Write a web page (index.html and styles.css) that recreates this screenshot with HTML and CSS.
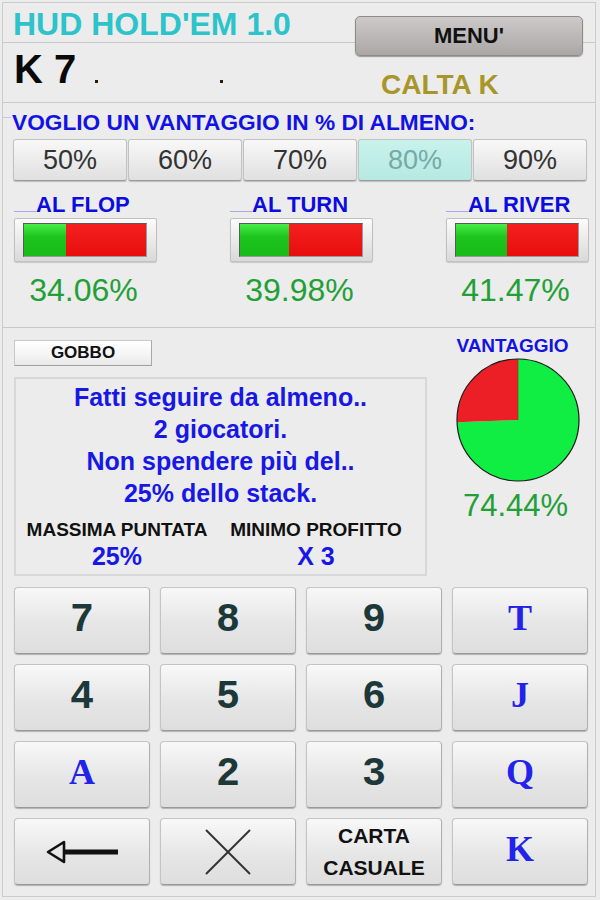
FILE: index.html
```html
<!DOCTYPE html>
<html lang="it">
<head>
<meta charset="utf-8">
<title>HUD HOLD'EM 1.0</title>
<link rel="stylesheet" href="styles.css">
</head>
<body>
<div class="app">
  <header class="title-row"><h1 class="title">HUD HOLD'EM 1.0</h1></header>
  <button class="menu-btn">MENU'</button>

  <section class="hand-row">
    <div class="hand">K 7<span class="dot dot1"></span><span class="dot dot2"></span></div>
    <div class="calta">CALTA K</div>
  </section>

  <section class="odds">
    <div class="want"><span class="tick"></span>VOGLIO UN VANTAGGIO IN % DI ALMENO:</div>
    <div class="pct-row">
      <button class="pct-btn">50%</button>
      <button class="pct-btn">60%</button>
      <button class="pct-btn">70%</button>
      <button class="pct-btn is-active">80%</button>
      <button class="pct-btn">90%</button>
    </div>
    <div class="streets">
      <div class="street">
        <div class="street-label"><span class="under"></span>AL FLOP</div>
        <div class="bar"><div class="bar-track"><div class="bar-green" style="width:34.06%"></div><div class="bar-red"></div></div></div>
        <div class="street-val">34.06%</div>
      </div>
      <div class="street">
        <div class="street-label"><span class="under"></span>AL TURN</div>
        <div class="bar"><div class="bar-track"><div class="bar-green" style="width:39.98%"></div><div class="bar-red"></div></div></div>
        <div class="street-val">39.98%</div>
      </div>
      <div class="street">
        <div class="street-label"><span class="under"></span>AL RIVER</div>
        <div class="bar"><div class="bar-track"><div class="bar-green" style="width:41.47%"></div><div class="bar-red"></div></div></div>
        <div class="street-val">41.47%</div>
      </div>
    </div>
  </section>

  <section class="advice">
    <div class="advice-top">
      <div class="advice-left">
        <div class="gobbo">GOBBO</div>
        <div class="info">
          <p class="info-text">Fatti seguire da almeno..<br>2 giocatori.<br>Non spendere più del..<br>25% dello stack.</p>
          <div class="info-stats">
            <div class="stat"><div class="stat-label">MASSIMA PUNTATA</div><div class="stat-val">25%</div></div>
            <div class="stat"><div class="stat-label">MINIMO PROFITTO</div><div class="stat-val">X 3</div></div>
          </div>
        </div>
      </div>
      <div class="advice-right">
        <div class="vant-label">VANTAGGIO</div>
        <svg class="pie" width="124" height="124" viewBox="0 0 124 124">
          <path d="M62,62 L1.04,64.13 A61,61 0 1,0 62,1 Z" fill="#10ee44"/>
          <path d="M62,62 L62,1 A61,61 0 0,0 1.04,64.13 Z" fill="#ec1f27"/>
          <circle cx="62" cy="62" r="61" fill="none" stroke="#1a1a1a" stroke-width="1.2"/>
          <line x1="62" y1="62" x2="62" y2="1" stroke="#7a3a20" stroke-width="0.6"/>
        </svg>
        <div class="vant-val">74.44%</div>
      </div>
    </div>

    <div class="keypad">
      <button class="key">7</button>
      <button class="key">8</button>
      <button class="key">9</button>
      <button class="key key-card">T</button>
      <button class="key">4</button>
      <button class="key">5</button>
      <button class="key">6</button>
      <button class="key key-card">J</button>
      <button class="key key-card">A</button>
      <button class="key">2</button>
      <button class="key">3</button>
      <button class="key key-card">Q</button>
      <button class="key key-icon" aria-label="indietro">
        <svg width="74" height="30" viewBox="0 0 74 30">
          <polygon points="3,15 19,5 19,25" fill="none" stroke="#111" stroke-width="2.6" stroke-linejoin="round"/>
          <line x1="19" y1="15" x2="73" y2="15" stroke="#111" stroke-width="5"/>
        </svg>
      </button>
      <button class="key key-icon" aria-label="cancella">
        <svg width="48" height="48" viewBox="0 0 48 48">
          <line x1="2" y1="2" x2="46" y2="46" stroke="#333" stroke-width="2"/>
          <line x1="46" y1="2" x2="2" y2="46" stroke="#333" stroke-width="2"/>
        </svg>
      </button>
      <button class="key key-text">CARTA<br>CASUALE</button>
      <button class="key key-card">K</button>
    </div>
  </section>
</div>
</body>
</html>
```

FILE: styles.css
```css
* { box-sizing: border-box; }
html, body { margin: 0; padding: 0; }
body {
  width: 600px;
  height: 900px;
  background: #ececec;
  padding: 2px 4px 0 2px;
  font-family: "Liberation Sans", Arial, sans-serif;
  overflow: hidden;
}
.app {
  position: relative;
  height: 895px;
  border: 1px solid #cccccc;
  background: #ececec;
}

/* header */
.title-row {
  height: 40px;
  border-bottom: 1px solid #c9c9c9;
  padding: 3px 0 0 10px;
}
.title {
  margin: 0;
  font-size: 32px;
  line-height: 36px;
  font-weight: bold;
  color: #2cc3cb;
  white-space: nowrap;
}
.menu-btn {
  position: absolute;
  left: 352px;
  top: 13px;
  width: 228px;
  height: 40px;
  border: 1px solid #8e8a8a;
  border-radius: 5px;
  background: linear-gradient(#cdc9c9, #aba7a7);
  box-shadow: 0 1px 1px rgba(0,0,0,0.35);
  font-family: "Liberation Sans", Arial, sans-serif;
  font-size: 22px;
  font-weight: bold;
  color: #111;
  padding: 0;
}

/* hand row */
.hand-row {
  height: 60px;
  border-bottom: 1px solid #c9c9c9;
  display: grid;
  grid-template-columns: 378px auto;
}
.hand {
  padding: 6px 0 0 11px;
  font-size: 40px;
  line-height: 40px;
  font-weight: bold;
  color: #0a0a0a;
  white-space: nowrap;
}
.dot {
  display: inline-block;
  width: 3px;
  height: 3px;
  background: #2a1a08;
  vertical-align: baseline;
}
.dot1 { margin-left: 19px; }
.dot2 { margin-left: 122px; }
.calta {
  padding-top: 27px;
  font-size: 28px;
  line-height: 30px;
  font-weight: bold;
  color: #a8962a;
  white-space: nowrap;
}

/* odds section */
.odds {
  height: 225px;
  border-bottom: 1px solid #c9c9c9;
  padding-top: 7px;
}
.want {
  font-size: 22.7px;
  line-height: 25px;
  font-weight: bold;
  color: #1212e4;
  white-space: nowrap;
}
.tick {
  display: inline-block;
  width: 8px;
  height: 1px;
  margin-right: 1px;
  background: #c4c4ee;
  vertical-align: 12px;
}
.pct-row {
  margin-top: 4px;
  padding-left: 10px;
  display: flex;
  gap: 1px;
}
.pct-btn {
  width: 114px;
  height: 42px;
  padding: 0;
  border: 1px solid #c2c2c2;
  border-bottom-color: #9c9c9c;
  border-radius: 3px;
  background: linear-gradient(#f8f8f8, #e0e0e0);
  box-shadow: 0 1px 1px rgba(0,0,0,0.2);
  font-family: "Liberation Sans", Arial, sans-serif;
  font-size: 27px;
  color: #333;
}
.pct-btn.is-active {
  background: linear-gradient(#c9f2ec, #b6e9e2);
  color: #74aaa8;
}
.streets {
  margin-top: 12px;
  padding-left: 11px;
  display: grid;
  grid-template-columns: repeat(3, 143px);
  column-gap: 73px;
}
.street-label {
  font-size: 22px;
  line-height: 23px;
  font-weight: bold;
  color: #0c0ce0;
  white-space: nowrap;
}
.under {
  display: inline-block;
  width: 22px;
  height: 0;
  border-bottom: 1px solid #a8a8e6;
}
.bar {
  margin-top: 2px;
  height: 44px;
  padding: 4px 9px 4px 8px;
  border: 1px solid #c0c0c0;
  border-radius: 2px;
  background: linear-gradient(#fbfbfb, #d9d9d9);
  box-shadow: 0 1px 1px rgba(0,0,0,0.15);
}
.bar-track {
  display: flex;
  height: 100%;
  border: 1px solid #5a5a5a;
  border-right-color: #999;
  border-bottom-color: #999;
}
.bar-green { background: linear-gradient(#48ee48, #1cc41c 40%, #19bb19); }
.bar-red { flex: 1; background: linear-gradient(#f42020, #e80d0d); }
.street-val {
  margin-top: 10px;
  padding-right: 4px;
  text-align: center;
  font-size: 32px;
  line-height: 36px;
  color: #22a035;
}

/* advice */
.advice {
  padding: 8px 0 0 11px;
}
.advice-top {
  display: grid;
  grid-template-columns: 413px auto;
}
.advice-left { padding-top: 4px; }
.gobbo {
  width: 138px;
  height: 26px;
  border: 1px solid #c8c8c8;
  border-right-color: #a8a8a8;
  border-bottom-color: #a0a0a0;
  background: linear-gradient(#ffffff, #f4f4f4 60%, #e8e8e8);
  text-align: center;
  font-size: 17px;
  line-height: 24px;
  font-weight: bold;
  color: #111;
}
.info {
  margin-top: 11px;
  height: 199px;
  border: 2px solid #d8d8d8;
  padding-top: 2px;
}
.info-text {
  margin: 0;
  text-align: center;
  font-size: 25px;
  line-height: 32px;
  font-weight: bold;
  color: #1818e6;
}
.info-stats {
  margin-top: 11px;
  display: grid;
  grid-template-columns: 202px 196px;
}
.stat { text-align: center; white-space: nowrap; }
.stat-label {
  font-size: 19px;
  line-height: 20px;
  font-weight: bold;
  color: #111;
}
.stat-val {
  margin-top: 2px;
  font-size: 25px;
  line-height: 28px;
  font-weight: bold;
  color: #1818e6;
}
.advice-right {
  padding-left: 29px;
  width: 153px;
}
.vant-label {
  width: 124px;
  padding-right: 11px;
  text-align: center;
  font-size: 19px;
  line-height: 20px;
  font-weight: bold;
  color: #1414e0;
  white-space: nowrap;
}
.pie {
  display: block;
  margin-top: 2px;
}
.vant-val {
  width: 124px;
  padding-right: 5px;
  margin-top: 7px;
  text-align: center;
  font-size: 31px;
  line-height: 34px;
  color: #22a035;
  white-space: nowrap;
}

/* keypad */
.keypad {
  margin-top: 11px;
  display: grid;
  grid-template-columns: repeat(4, 136px);
  grid-auto-rows: 67px;
  column-gap: 10px;
  row-gap: 10px;
}
.key {
  padding: 0;
  border: 1px solid #c4c4c4;
  border-bottom-color: #989898;
  border-right-color: #b0b0b0;
  border-radius: 4px;
  background: linear-gradient(#f8f8f8, #e6e6e6 55%, #dedede);
  box-shadow: 0 1px 1px rgba(0,0,0,0.25);
  font-family: "Liberation Mono", "Courier New", monospace;
  font-size: 40px;
  font-weight: bold;
  color: #1c3838;
  display: flex;
  align-items: center;
  justify-content: center;
}
.key-card {
  font-family: "Liberation Serif", "Times New Roman", serif;
  font-size: 36px;
  color: #2222ea;
  padding-bottom: 5px;
}
.key-icon svg { display: block; }
.key-text {
  font-family: "Liberation Sans", Arial, sans-serif;
  font-size: 21px;
  line-height: 32px;
  color: #111;
  text-align: center;
}
```
